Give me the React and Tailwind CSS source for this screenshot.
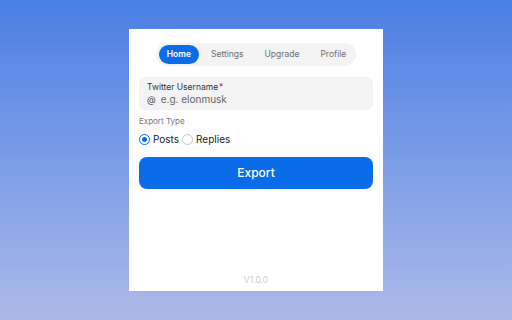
import { useState } from 'react';

export default function App() {
  const [tab, setTab] = useState('Home');
  const [type, setType] = useState('posts');
  const tabs = ['Home', 'Settings', 'Upgrade', 'Profile'];

  return (
    <div
      className="w-[512px] h-[320px] bg-gradient-to-b from-[#4a7fe4] to-[#acb9e7] pt-[29px] flex justify-center"
      style={{ fontFamily: 'Inter, "Noto Sans", sans-serif' }}
    >
      <div className="w-[254px] h-[262px] bg-white flex flex-col px-[10px] pt-[14px] pb-[4px]">
        <div className="self-center flex items-center bg-[#f3f3f4] rounded-full pl-[3px] pr-[1px] py-[2px] gap-[3px]">
          {tabs.map((t) => (
            <button
              key={t}
              onClick={() => setTab(t)}
              className={
                t === tab
                  ? 'h-[19px] px-[8px] rounded-full bg-[#0a6ce8] text-white text-[8.5px] font-semibold'
                  : 'h-[19px] px-[9px] rounded-full text-[#6f6f6f] text-[8.5px]'
              }
            >
              {t}
            </button>
          ))}
        </div>

        <div className="mt-[11px] h-[33px] bg-[#f3f3f4] rounded-[6px] px-[8px] pt-[5px]">
          <div className="text-[8.5px] leading-[11px] text-[#333]">
            Twitter Username<span className="text-[#e0245e] ml-[1px]">*</span>
          </div>
          <div className="flex items-center gap-[5px] text-[10px] leading-[13px] text-[#555]">
            <span className="text-[9px] text-[#444]">@</span>
            <span className="text-[#666]">e.g. elonmusk</span>
          </div>
        </div>

        <div className="mt-[6px] text-[8px] leading-[10px] text-[#777]">Export Type</div>

        <div className="mt-[6px] flex items-center gap-[3px] text-[10px] text-[#222]">
          <label className="flex items-center gap-[3px]" onClick={() => setType('posts')}>
            <span
              className={
                type === 'posts'
                  ? 'w-[11px] h-[11px] rounded-full border-[1.5px] border-[#0a6ce8] flex items-center justify-center'
                  : 'w-[11px] h-[11px] rounded-full border border-[#c8c8c8] flex items-center justify-center'
              }
            >
              {type === 'posts' && <span className="w-[5px] h-[5px] rounded-full bg-[#0a6ce8]" />}
            </span>
            Posts
          </label>
          <label className="flex items-center gap-[3px]" onClick={() => setType('replies')}>
            <span
              className={
                type === 'replies'
                  ? 'w-[11px] h-[11px] rounded-full border-[1.5px] border-[#0a6ce8] flex items-center justify-center'
                  : 'w-[11px] h-[11px] rounded-full border border-[#c8c8c8] flex items-center justify-center'
              }
            >
              {type === 'replies' && <span className="w-[5px] h-[5px] rounded-full bg-[#0a6ce8]" />}
            </span>
            Replies
          </label>
        </div>

        <button className="mt-[10px] h-[32px] rounded-[8px] bg-[#0a6ce8] text-white text-[12px] font-medium">
          Export
        </button>

        <div className="mt-auto text-center text-[8.5px] text-[#ccc]">V1.0.0</div>
      </div>
    </div>
  );
}
